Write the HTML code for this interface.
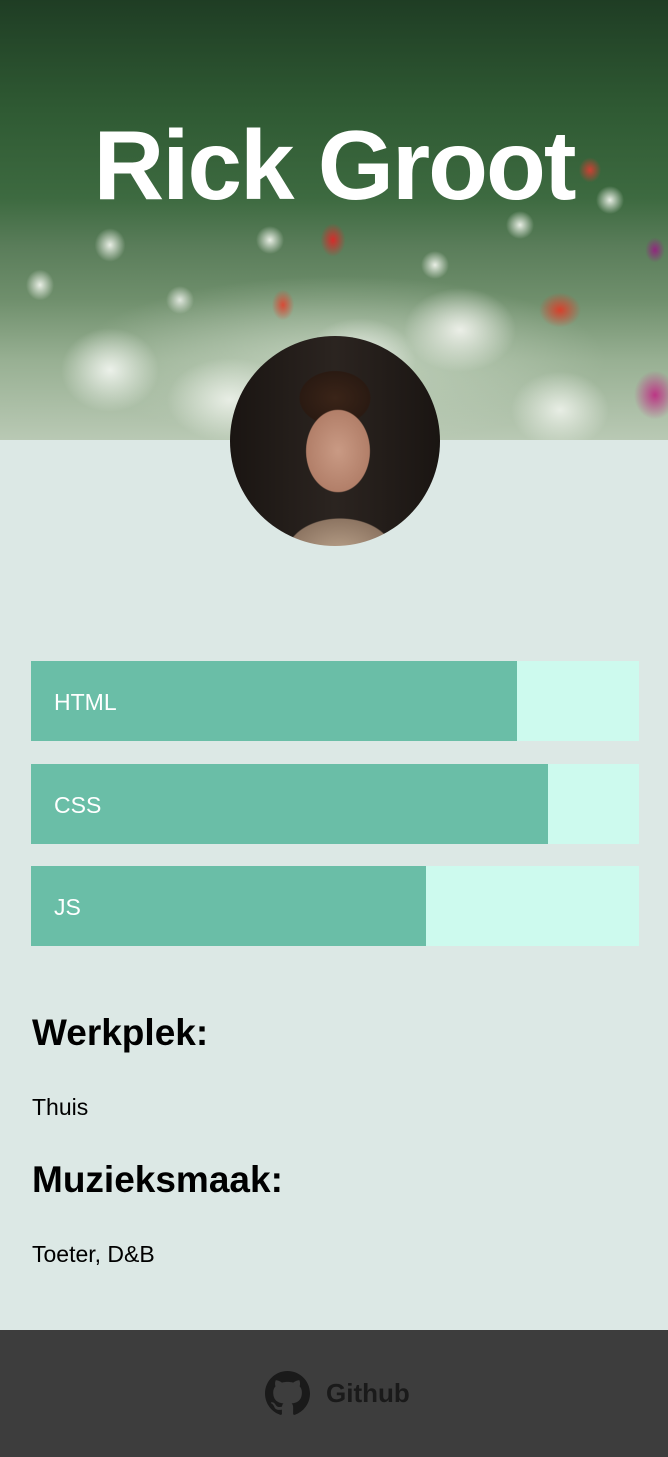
<!DOCTYPE html>
<html><head><meta charset="utf-8">
<style>
*{margin:0;padding:0;box-sizing:border-box}
html,body{width:668px;height:1457px;overflow:hidden}
body{background:#dce8e5;font-family:"Liberation Sans",sans-serif;position:relative}
.hero{position:absolute;left:0;top:0;width:668px;height:440px;overflow:hidden;
background:
radial-gradient(ellipse 70px 60px at 110px 370px,rgba(240,244,238,.95),transparent 70%),
radial-gradient(ellipse 90px 60px at 230px 400px,rgba(235,240,232,.95),transparent 70%),
radial-gradient(ellipse 80px 60px at 460px 330px,rgba(240,242,236,.95),transparent 70%),
radial-gradient(ellipse 80px 60px at 360px 360px,rgba(236,240,234,.9),transparent 70%),
radial-gradient(ellipse 70px 55px at 560px 410px,rgba(235,240,232,.95),transparent 70%),
radial-gradient(ellipse 30px 35px at 655px 395px,rgba(190,40,130,.9),transparent 70%),
radial-gradient(ellipse 30px 25px at 560px 310px,rgba(220,60,40,.95),transparent 70%),
radial-gradient(ellipse 18px 24px at 333px 240px,rgba(220,40,40,.95),transparent 70%),
radial-gradient(ellipse 16px 22px at 283px 305px,rgba(220,70,50,.95),transparent 70%),
radial-gradient(ellipse 16px 18px at 590px 170px,rgba(220,60,50,.9),transparent 70%),
radial-gradient(ellipse 14px 18px at 655px 250px,rgba(150,30,130,.9),transparent 70%),
radial-gradient(ellipse 22px 24px at 110px 245px,rgba(240,244,236,.95),transparent 70%),
radial-gradient(ellipse 20px 22px at 40px 285px,rgba(240,244,236,.95),transparent 70%),
radial-gradient(ellipse 20px 20px at 610px 200px,rgba(240,244,236,.95),transparent 70%),
radial-gradient(ellipse 20px 20px at 435px 265px,rgba(240,244,236,.95),transparent 70%),
radial-gradient(ellipse 20px 20px at 270px 240px,rgba(240,244,236,.95),transparent 70%),
radial-gradient(ellipse 20px 20px at 520px 225px,rgba(240,244,236,.95),transparent 70%),
radial-gradient(ellipse 20px 20px at 180px 300px,rgba(236,240,234,.9),transparent 70%),
radial-gradient(ellipse 380px 120px at 340px 360px,rgba(210,222,205,.7),transparent 70%),
linear-gradient(180deg,#1f3d24 0%,#2f5a33 25%,#3d6a40 45%,#5a7d5a 56%,#6f8f6c 68%,#98b093 82%,#b9c9b4 100%);}
h1{position:absolute;left:0;width:668px;top:110px;text-align:center;color:#fff;font-size:98px;font-weight:bold;letter-spacing:-2px;line-height:110px}
.av{position:absolute;left:230px;top:336px;width:210px;height:210px;border-radius:50%;overflow:hidden;
background:radial-gradient(ellipse 45px 58px at 108px 115px,#c99a84 0%,#b27f69 70%,transparent 72%),
radial-gradient(ellipse 75px 50px at 110px 218px,#b9a18a 0%,#8d7562 70%,transparent 72%),
radial-gradient(ellipse 50px 38px at 105px 62px,#3a2418 0%,#2a1a12 70%,transparent 72%),
linear-gradient(90deg,#1a1512,#2b2420 50%,#1a1512)}
.bar{position:absolute;left:31px;width:608px;height:80px;background:#cdfaee}
.bar div{height:80px;background:#6abea7;color:#fff;font-size:23px;line-height:82px;padding-left:23px}
h2{position:absolute;left:32px;font-size:37px;font-weight:bold;color:#000}
p{position:absolute;left:32px;font-size:23px;color:#000}
footer{position:absolute;left:0;top:1330px;width:668px;height:127px;background:#3d3d3d}
footer span{position:absolute;left:326px;top:48px;font-size:26px;font-weight:bold;color:#1a1a1a}
</style></head><body>
<div class="hero"></div>
<h1>Rick Groot</h1>
<div class="av"></div>
<div class="bar" style="top:661px"><div style="width:486px">HTML</div></div>
<div class="bar" style="top:764px"><div style="width:517px">CSS</div></div>
<div class="bar" style="top:866px"><div style="width:395px">JS</div></div>
<h2 style="top:1012px">Werkplek:</h2>
<p style="top:1094px">Thuis</p>
<h2 style="top:1159px">Muzieksmaak:</h2>
<p style="top:1241px">Toeter, D&amp;B</p>
<footer>
<svg style="position:absolute;left:265px;top:41px" width="45" height="45" viewBox="0 0 16 16"><path fill="#1a1a1a" d="M8 0C3.58 0 0 3.58 0 8c0 3.540 2.29 6.53 5.47 7.59.4.07.55-.17.55-.38 0-.19-.01-.82-.01-1.49-2.01.37-2.530-.49-2.69-.94-.09-.23-.48-.94-.82-1.13-.28-.15-.68-.52-.01-.53.63-.01 1.08.58 1.23.82.72 1.21 1.87.87 2.33.66.07-.52.28-.87.51-1.07-1.78-.2-3.64-.89-3.64-3.95 0-.87.31-1.59.82-2.15-.08-.2-.36-1.02.08-2.12 0 0 .67-.21 2.2.82.64-.18 1.32-.27 2-.27.68 0 1.36.09 2 .27 1.53-1.04 2.2-.82 2.2-.82.44 1.1.16 1.92.08 2.12.51.56.82 1.27.82 2.15 0 3.07-1.87 3.75-3.65 3.95.29.25.54.73.54 1.48 0 1.070-.01 1.93-.01 2.2 0 .21.15.46.55.38A8.013 8.013 0 0016 8c0-4.42-3.58-8-8-8z"/></svg>
<span>Github</span>
</footer>
</body></html>
